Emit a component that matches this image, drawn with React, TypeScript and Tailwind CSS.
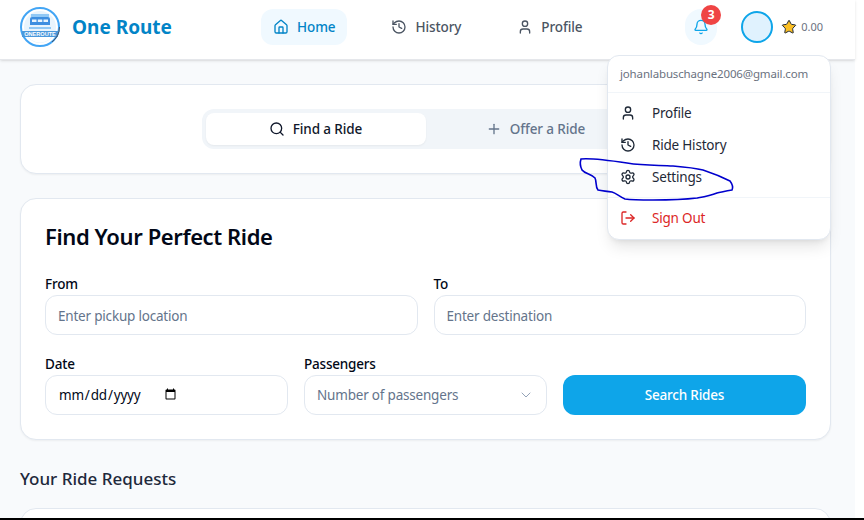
import { Home, History, User, Bell, Star, Settings, LogOut, Search, Plus, ChevronDown } from "lucide-react";

function Logo() {
  return (
    <svg width="40" height="40" viewBox="0 0 40 40" className="shrink-0">
      <circle cx="20" cy="20" r="19" fill="#fff" stroke="#42a5f5" strokeWidth="2" />
      <circle cx="20" cy="20" r="16" fill="#e8f4fd" />
      <path d="M5 25 A16 16 0 0 0 35 25 Z" fill="#fff" />
      <rect x="11" y="7" width="18" height="3" fill="#90c8f5" />
      <path d="M10 12 Q10 10 12 10 H28 Q30 10 30 12 V18 H10 Z" fill="#3d8ee0" />
      <rect x="12" y="12.5" width="4.5" height="2.5" fill="#e8f4fd" />
      <rect x="17.8" y="12.5" width="4.5" height="2.5" fill="#e8f4fd" />
      <rect x="23.5" y="12.5" width="4.5" height="2.5" fill="#e8f4fd" />
      <rect x="9" y="20" width="22" height="2" fill="#90c8f5" />
      <rect x="2" y="24" width="36" height="6" fill="#4a98dc" />
      <text x="20" y="29" textAnchor="middle" fontSize="5.6" fontWeight="700" fill="#fff" fontFamily="Liberation Sans, sans-serif">ONEROUTE</text>
      <path d="M32 35 A19.5 19.5 0 0 0 39.5 20" fill="none" stroke="#4b5563" strokeWidth="1" />
    </svg>
  );
}

function NavItem({ icon: Icon, label, active }: { icon: typeof Home; label: string; active?: boolean }) {
  return (
    <div className={active ? "flex h-9 items-center gap-2 rounded-xl bg-[#f0f9ff] px-3 text-[#0284c7]" : "flex h-9 items-center gap-2 rounded-xl px-3 text-[#4b5563]"}>
      <Icon size={16} strokeWidth={2} />
      <span className="text-[13.5px] font-medium tracking-[-0.1px]">{label}</span>
    </div>
  );
}

function MenuItem({ icon: Icon, label, red }: { icon: typeof Home; label: string; red?: boolean }) {
  return (
    <div className={red ? "flex h-8 items-center gap-4 px-3 text-[13.5px] tracking-[-0.2px] text-[#dc2626]" : "flex h-8 items-center gap-4 px-3 text-[13.5px] tracking-[-0.2px] text-[#1f2937]"}>
      <Icon size={16} strokeWidth={2} />
      <span>{label}</span>
    </div>
  );
}

export default function App() {
  return (
    <div className="relative flex h-[520px] w-[864px] flex-col overflow-hidden bg-white font-['Noto_Sans','Open_Sans',sans-serif]">
      <div className="flex min-h-0 w-[855px] flex-1 flex-col bg-[#f8fafc]">
        <header className="flex h-[60px] shrink-0 items-center border-b border-[#e5e7eb] bg-white pb-[5px] pl-5 pr-8 shadow-sm">
          <div className="flex w-[241px] items-center gap-3">
            <Logo />
            <span className="text-[19px] font-bold text-[#0284c7]">One Route</span>
          </div>
          <nav className="flex items-center gap-[32px]">
            <NavItem icon={Home} label="Home" active />
            <NavItem icon={History} label="History" />
            <NavItem icon={User} label="Profile" />
          </nav>
          <div className="ml-auto flex items-center">
            <div className="relative flex h-9 w-8 items-center justify-center rounded-full bg-[#f0f9ff] text-[#0ea5e9]">
              <Bell size={16} strokeWidth={2} />
              <span className="absolute -right-1 -top-1 flex h-5 w-5 items-center justify-center rounded-full bg-[#ef4444] text-xs font-bold text-white">3</span>
            </div>
            <div className="ml-6 h-8 w-8 rounded-full border-2 border-[#0ea5e9] bg-[#e0f2fe]" />
            <Star size={16} strokeWidth={1.5} className="ml-2 fill-[#fbbf24] text-[#1f2937]" />
            <span className="ml-1 text-[11px] text-[#6b7280]">0.00</span>
          </div>
        </header>
        <main className="flex min-h-0 flex-1 flex-col overflow-hidden pl-5 pr-6 pt-6">
          <section className="flex h-[90px] shrink-0 items-center justify-center rounded-2xl border border-[#e2e8f0] bg-white shadow-xs">
            <div className="flex h-10 w-[448px] items-center rounded-xl bg-[#f1f5f9] p-1">
              <div className="flex h-8 flex-1 items-center justify-center gap-2 rounded-lg bg-white text-[13.5px] font-medium tracking-[-0.1px] text-[#0f172a] shadow-xs">
                <Search size={16} strokeWidth={2} />
                Find a Ride
              </div>
              <div className="flex h-8 flex-1 items-center justify-center gap-2 text-[13.5px] font-medium tracking-[-0.1px] text-[#64748b]">
                <Plus size={16} strokeWidth={2} />
                Offer a Ride
              </div>
            </div>
          </section>
          <section className="mt-6 shrink-0 rounded-2xl border border-[#e2e8f0] bg-white px-6 pb-6 pt-[21px] shadow-xs">
            <h1 className="text-[22px] font-semibold leading-8 tracking-[-0.4px] text-[#020817]">Find Your Perfect Ride</h1>
            <div className="mt-[22px] grid grid-cols-2 gap-4">
              <label className="block">
                <span className="block text-[13.5px] font-medium leading-5 tracking-[-0.2px] text-[#020817]">From</span>
                <div className="mt-px flex h-10 items-center rounded-xl border border-[#e2e8f0] px-3 pt-[2px] text-[13.5px] tracking-[-0.2px] text-[#64748b]">Enter pickup location</div>
              </label>
              <label className="block">
                <span className="block text-[13.5px] font-medium leading-5 tracking-[-0.2px] text-[#020817]">To</span>
                <div className="mt-px flex h-10 items-center rounded-xl border border-[#e2e8f0] px-3 pt-[2px] text-[13.5px] tracking-[-0.2px] text-[#64748b]">Enter destination</div>
              </label>
            </div>
            <div className="mt-[19px] grid grid-cols-3 items-end gap-4">
              <label className="block">
                <span className="block text-[13.5px] font-medium leading-5 tracking-[-0.2px] text-[#020817]">Date</span>
                <div className="mt-px flex h-10 items-center rounded-xl border border-[#e2e8f0] px-3">
                  <input type="date" className="w-[121px] text-[13.5px] tracking-[-0.2px] text-[#020817] outline-none" />
                </div>
              </label>
              <label className="block">
                <span className="block text-[13.5px] font-medium leading-5 tracking-[-0.2px] text-[#020817]">Passengers</span>
                <div className="mt-px flex h-10 items-center justify-between rounded-xl border border-[#e2e8f0] px-3 text-[13.5px] tracking-[-0.2px] text-[#64748b]">
                  Number of passengers
                  <ChevronDown size={16} strokeWidth={1.5} className="text-[#94a3b8]" />
                </div>
              </label>
              <button className="flex h-10 items-center justify-center rounded-xl bg-[#0ea5e9] text-[13.5px] font-medium tracking-[-0.2px] text-white">Search Rides</button>
            </div>
          </section>
          <h2 className="mt-[25px] shrink-0 text-[17px] font-medium leading-7 text-[#1e293b]">Your Ride Requests</h2>
          <section className="mt-[15px] min-h-[40px] shrink-0 rounded-2xl border border-[#e2e8f0] bg-white" />
        </main>
      </div>
      <div className="h-[2px] shrink-0 bg-black" />

      <div className="absolute left-[607px] top-[55px] w-[224px] rounded-xl border border-[#e2e8f0] bg-white pb-[5px] pt-[6px] shadow-lg">
        <div className="border-b border-[#f1f5f9] px-3 pb-[8px] pt-[2px] text-[11.5px] leading-5 tracking-[-0.15px] text-[#6b7280]">johanlabuschagne2006@gmail.com</div>
        <div className="mt-1">
          <MenuItem icon={User} label="Profile" />
          <MenuItem icon={History} label="Ride History" />
          <MenuItem icon={Settings} label="Settings" />
        </div>
        <div className="mt-1 border-t border-[#f1f5f9] pt-1">
          <MenuItem icon={LogOut} label="Sign Out" red />
        </div>
      </div>

      <svg className="pointer-events-none absolute left-[575px] top-[150px]" width="165" height="55" viewBox="575 150 165 55" fill="none">
        <path d="M581 159 C590 158 600 159 627 163 C645 166 660 165 673 166 C685 167 695 168 703 170 C715 174 722 177 730 181 C733 185 733 188 732 190 C726 191 722 192 717 193 C710 196 703 197 697 198 C680 200 665 200 653 200 C640 200 632 200 625 199 C620 197 616 193 612 192 C606 191 602 191 598 190 C595 186 597 182 595 178 C592 174 585 174 582 170 C580 166 580 162 581 159 Z" stroke="#0000cd" strokeWidth="1.6" />
      </svg>
    </div>
  );
}
